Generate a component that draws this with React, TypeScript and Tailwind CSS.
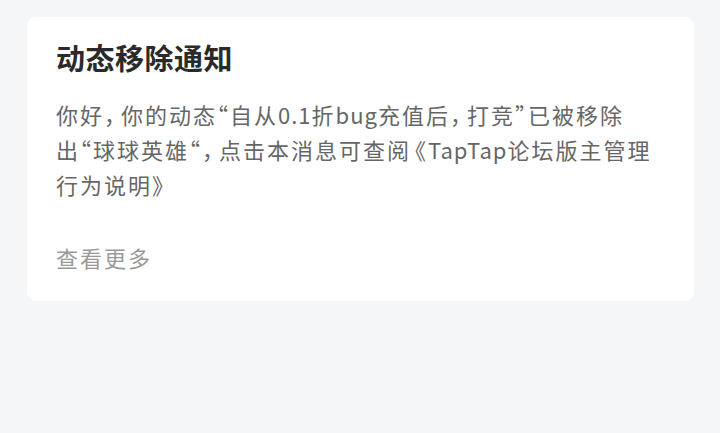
export default function App() {
  const comma = <span className="mr-[4px]">，</span>;
  return (
    <div
      lang="zh-CN"
      className="w-[720px] h-[433px] bg-[#f5f6f8] pt-[17px] pl-[27px]"
      style={{ fontFamily: '"Noto Sans CJK SC", "Noto Sans", sans-serif' }}
    >
      <div className="w-[667px] h-[284px] bg-white rounded-[9px] px-[29px] pt-[20px]">
        <h1 className="text-[29px] leading-[40px] font-semibold tracking-[0.5px] text-[#2a2a2a]">
          动态移除通知
        </h1>
        <p className="mt-[20px] text-[22px] leading-[35px] tracking-[2px] text-[#666666] [font-feature-settings:'halt']">
          你好{comma}你的动态“自从<span className="tracking-[1px]">0.1</span>折
          <span className="tracking-[1px]">bug</span>充值后{comma}打竞”已被移除
          <br />
          出“球球英雄“{comma}点击本消息可查阅<span className="ml-[4px]">《</span>
          <span className="tracking-[1px]">TapTap</span>论坛版主管理
          <br />
          行为说明》
        </p>
        <div className="mt-[39px] text-[22px] leading-[32px] tracking-[2px] text-[#999999]">查看更多</div>
      </div>
    </div>
  );
}
